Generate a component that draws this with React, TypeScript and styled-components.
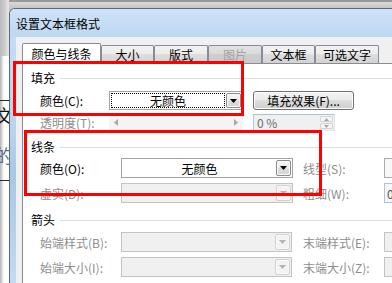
import React from "react";
import styled, { createGlobalStyle, css } from "styled-components";

const FONT = `"Noto Sans CJK SC", "Noto Sans", "DejaVu Sans", sans-serif`;

const Global = createGlobalStyle`
  html, body { margin: 0; padding: 0; }
  body { background: #c4c4c4; font-family: ${FONT}; font-size: 12px; color: #000; }
  * { box-sizing: border-box; }
`;

const Screen = styled.div`
  position: relative;
  width: 392px;
  height: 283px;
  overflow: hidden;
  display: flex;
  align-items: flex-start;
  background: linear-gradient(#9a9a9a 0, #9a9a9a 2px, #d9d9d9 2px, #c6c6c6 8px);
`;

/* ---------- document behind the dialog ---------- */
const Backdrop = styled.div`
  width: 9px;
  height: 100%;
  flex-shrink: 0;
  display: flex;
  flex-direction: column;
`;
const BackdropTop = styled.div`
  height: 56px;
  background: linear-gradient(90deg, #bcbcbc 0, #cdcdcd 5px, #e4e4e4 8px);
`;
const BackdropDoc = styled.div`
  flex: 1;
  display: flex;
  flex-direction: column;
  overflow: hidden;
  background: linear-gradient(90deg, #b4b4b4 0, #ececec 3px, #fff 4px);
`;
const DocRule = styled.div<{ $top: number }>`
  height: 1px;
  margin-top: ${(p) => p.$top}px;
  background: #2a2a2a;
`;
const DocGlyph = styled.div<{ $top: number; $color: string }>`
  margin-top: ${(p) => p.$top}px;
  margin-left: -5px;
  font-size: 18px;
  line-height: 20px;
  white-space: nowrap;
  color: ${(p) => p.$color};
`;

/* ---------- dialog window ---------- */
const Dialog = styled.div`
  margin-top: 8px;
  width: 400px;
  height: 275px;
  flex-shrink: 0;
  display: flex;
  flex-direction: column;
  border: 1px solid #5b6a79;
  border-right: none;
  border-bottom: none;
  border-radius: 6px 0 0 0;
  overflow: hidden;
  background: linear-gradient(180deg, #c8def5 0, #b9d3ee 45%, #a9c6e4 60%, #c3dbf2 100%);
`;
const TitleBar = styled.div`
  height: 28px;
  flex-shrink: 0;
  display: flex;
  align-items: center;
  padding-left: 6px;
  background: linear-gradient(#cfe3f8, #bdd7f2);
  font-size: 12px;
  color: #000;
`;
const ClientRow = styled.div`
  flex: 1;
  display: flex;
  padding-left: 6px;
`;
const Client = styled.div`
  flex: 1;
  display: flex;
  flex-direction: column;
  background: #f0f0f0;
  padding: 6px 0 0 6px;
`;

/* ---------- tabs ---------- */
const TabStrip = styled.div`
  display: flex;
  align-items: flex-end;
  height: 20px;
  flex-shrink: 0;
`;
const Tab = styled.div<{ $w: number; $active?: boolean; $disabled?: boolean }>`
  width: ${(p) => p.$w}px;
  height: ${(p) => (p.$active ? 21 : 18)}px;
  margin-bottom: ${(p) => (p.$active ? -1 : 0)}px;
  flex-shrink: 0;
  position: relative;
  z-index: ${(p) => (p.$active ? 2 : 1)};
  display: flex;
  align-items: center;
  justify-content: center;
  padding-bottom: ${(p) => (p.$active ? 2 : 0)}px;
  border: 1px solid #898c95;
  border-bottom: none;
  border-radius: 2px 2px 0 0;
  color: ${(p) => (p.$disabled ? "#a3a3a3" : "#000")};
  background: ${(p) =>
    p.$active
      ? "#fff"
      : p.$disabled
      ? "linear-gradient(#e2e2e2, #dadada 50%, #cfcfcf 50%, #c9c9c9)"
      : "linear-gradient(#f3f3f3, #ececec 50%, #dedede 50%, #d2d2d2)"};
`;
const Panel = styled.div`
  flex: 1;
  display: flex;
  flex-direction: column;
  background: #fff;
  border: 1px solid #898c95;
  border-right: none;
  border-bottom: none;
  padding: 7px 0 0 8px;
`;

/* ---------- groups and rows ---------- */
const GroupHeader = styled.div<{ $top: number }>`
  display: flex;
  align-items: center;
  gap: 5px;
  height: 14px;
  margin-top: ${(p) => p.$top}px;
`;
const GroupTitle = styled.span`
  line-height: 14px;
  white-space: nowrap;
`;
const GroupRule = styled.div`
  flex: 1;
  height: 1px;
  background: #d5dfe5;
`;
const Row = styled.div<{ $top: number; $h: number }>`
  display: flex;
  align-items: center;
  height: ${(p) => p.$h}px;
  margin-top: ${(p) => p.$top}px;
  padding-left: 9px;
`;
const Label = styled.span<{ $w: number; $gap?: number; $disabled?: boolean }>`
  width: ${(p) => p.$w}px;
  margin-left: ${(p) => p.$gap ?? 0}px;
  flex-shrink: 0;
  white-space: nowrap;
  color: ${(p) => (p.$disabled ? "#8d8d8d" : "#000")};
`;

/* ---------- controls ---------- */
const Combo = styled.div<{ $w: number; $disabled?: boolean }>`
  width: ${(p) => p.$w}px;
  height: 100%;
  flex-shrink: 0;
  display: flex;
  padding: 1px;
  border: 1px solid ${(p) => (p.$disabled ? "#c4c4c4" : "#a3a3a3")};
  background: ${(p) => (p.$disabled ? "#f0f0f0" : "#fff")};
`;
const ComboValue = styled.div<{ $focused?: boolean }>`
  flex: 1;
  display: flex;
  align-items: center;
  justify-content: center;
  white-space: nowrap;
  ${(p) =>
    p.$focused &&
    css`
      border: 1px dotted #000;
      margin-right: 1px;
    `}
`;
const DropButton = styled.div<{ $disabled?: boolean }>`
  width: 15px;
  flex-shrink: 0;
  display: flex;
  align-items: center;
  justify-content: center;
  border: 1px solid ${(p) => (p.$disabled ? "#d2d2d2" : "#8b8b8b")};
  border-radius: 2px;
  background: ${(p) =>
    p.$disabled ? "#f3f3f3" : "linear-gradient(#f7f7f7, #e9e9e9 50%, #dcdcdc 50%, #d6d6d6)"};
  box-shadow: inset 0 0 0 1px ${(p) => (p.$disabled ? "#f8f8f8" : "#fbfbfb")};
`;
const PushButton = styled.div<{ $w: number; $gap: number }>`
  width: ${(p) => p.$w}px;
  height: 100%;
  margin-left: ${(p) => p.$gap}px;
  flex-shrink: 0;
  display: flex;
  align-items: center;
  justify-content: center;
  white-space: nowrap;
  border: 1px solid #707070;
  border-radius: 3px;
  background: linear-gradient(#f2f2f2, #ebebeb 50%, #dddddd 50%, #cfcfcf);
  box-shadow: inset 0 0 0 1px #fcfcfc;
`;
const Slider = styled.div<{ $w: number }>`
  width: ${(p) => p.$w}px;
  height: 100%;
  flex-shrink: 0;
  display: flex;
  align-items: center;
  justify-content: space-between;
  padding: 0 5px;
  background: #f4f4f4;
`;
const Spin = styled.div<{ $w: number; $gap: number }>`
  width: ${(p) => p.$w}px;
  height: 100%;
  margin-left: ${(p) => p.$gap}px;
  flex-shrink: 0;
  display: flex;
  border: 1px solid;
  border-color: #abc3de #dde6ef #e3e9ef #b6cae0;
  background: #f0f0f0;
`;
const SpinValue = styled.div`
  flex: 1;
  display: flex;
  align-items: center;
  padding-left: 3px;
  color: #6d6d6d;
  white-space: nowrap;
`;
const SpinButtons = styled.div`
  width: 14px;
  display: flex;
  flex-direction: column;
  gap: 1px;
  padding: 1px 1px 1px 0;
`;
const SpinHalf = styled.div`
  flex: 1;
  display: flex;
  align-items: center;
  justify-content: center;
  border: 1px solid #d4d4d4;
  border-radius: 1px;
  background: #f5f5f5;
`;
const EdgeField = styled.div<{ $variant: "plain" | "focus" | "disabled" }>`
  width: 40px;
  height: 100%;
  flex-shrink: 0;
  display: flex;
  align-items: center;
  padding-left: 2px;
  border: 1px solid
    ${(p) => (p.$variant === "focus" ? "#a9c3e0" : p.$variant === "plain" ? "#ababab" : "#c4c4c4")};
  background: ${(p) => (p.$variant === "disabled" ? "#f0f0f0" : "#f7f7f7")};
  color: #505050;
`;

/* ---------- annotation overlay ---------- */
const Annotation = styled.div<{ $x: number; $y: number; $w: number; $h: number }>`
  position: absolute;
  left: ${(p) => p.$x}px;
  top: ${(p) => p.$y}px;
  width: ${(p) => p.$w}px;
  height: ${(p) => p.$h}px;
  border: 3px solid #ff0000;
  pointer-events: none;
  z-index: 10;
`;

/* ---------- icons ---------- */
const ArrowDown = ({ color = "#000", w = 7, h = 4 }: { color?: string; w?: number; h?: number }) => (
  <svg width={w} height={h} viewBox={`0 0 ${w} ${h}`}>
    <path d={`M0 0H${w}L${w / 2} ${h}Z`} fill={color} />
  </svg>
);
const ArrowUp = ({ color = "#000", w = 5, h = 3 }: { color?: string; w?: number; h?: number }) => (
  <svg width={w} height={h} viewBox={`0 0 ${w} ${h}`}>
    <path d={`M0 ${h}H${w}L${w / 2} 0Z`} fill={color} />
  </svg>
);
const ArrowSide = ({ dir, color = "#a8a8a8" }: { dir: "left" | "right"; color?: string }) => (
  <svg width={4} height={7} viewBox="0 0 4 7">
    <path d={dir === "left" ? "M4 0V7L0 3.5Z" : "M0 0V7L4 3.5Z"} fill={color} />
  </svg>
);

type ComboProps = { w: number; value?: string; disabled?: boolean; focused?: boolean };
const ComboBox = ({ w, value = "", disabled, focused }: ComboProps) => (
  <Combo $w={w} $disabled={disabled}>
    <ComboValue $focused={focused}>{value}</ComboValue>
    <DropButton $disabled={disabled}>
      <ArrowDown color={disabled ? "#b4b4b4" : "#000"} />
    </DropButton>
  </Combo>
);

const tabs = [
  { label: "颜色与线条", w: 79, active: true },
  { label: "大小", w: 53 },
  { label: "版式", w: 54 },
  { label: "图片", w: 54, disabled: true },
  { label: "文本框", w: 53 },
  { label: "可选文字", w: 64 },
];

export default function App() {
  return (
    <>
      <Global />
      <Screen>
        <Backdrop>
          <BackdropTop />
          <BackdropDoc>
            <DocRule $top={44} />
            <DocGlyph $top={4} $color="#111">文</DocGlyph>
            <DocGlyph $top={20} $color="#5a6c86">的</DocGlyph>
            <DocRule $top={15} />
          </BackdropDoc>
        </Backdrop>

        <Dialog>
          <TitleBar>设置文本框格式</TitleBar>
          <ClientRow>
            <Client>
              <TabStrip>
                {tabs.map((t) => (
                  <Tab key={t.label} $w={t.w} $active={t.active} $disabled={t.disabled}>
                    {t.label}
                  </Tab>
                ))}
              </TabStrip>
              <Panel>
                <GroupHeader $top={0}>
                  <GroupTitle>填充</GroupTitle>
                  <GroupRule />
                </GroupHeader>
                <Row $top={6} $h={19}>
                  <Label $w={69}>颜色(C):</Label>
                  <ComboBox w={134} value="无颜色" focused />
                  <PushButton $w={101} $gap={10}>填充效果(F)...</PushButton>
                </Row>
                <Row $top={4} $h={17}>
                  <Label $w={69} $disabled>透明度(T):</Label>
                  <Slider $w={134}>
                    <ArrowSide dir="left" />
                    <ArrowSide dir="right" />
                  </Slider>
                  <Spin $w={82} $gap={10}>
                    <SpinValue>0 %</SpinValue>
                    <SpinButtons>
                      <SpinHalf>
                        <ArrowUp color="#a8a8a8" />
                      </SpinHalf>
                      <SpinHalf>
                        <ArrowDown color="#a8a8a8" w={5} h={3} />
                      </SpinHalf>
                    </SpinButtons>
                  </Spin>
                </Row>

                <GroupHeader $top={9}>
                  <GroupTitle>线条</GroupTitle>
                  <GroupRule />
                </GroupHeader>
                <Row $top={4} $h={20}>
                  <Label $w={81}>颜色(O):</Label>
                  <ComboBox w={172} value="无颜色" />
                  <Label $w={81} $gap={10} $disabled>线型(S):</Label>
                  <EdgeField $variant="plain" />
                </Row>
                <Row $top={5} $h={20}>
                  <Label $w={81} $disabled>虚实(D):</Label>
                  <ComboBox w={172} disabled />
                  <Label $w={81} $gap={10} $disabled>粗细(W):</Label>
                  <EdgeField $variant="focus">0</EdgeField>
                </Row>

                <GroupHeader $top={10}>
                  <GroupTitle>箭头</GroupTitle>
                  <GroupRule />
                </GroupHeader>
                <Row $top={5} $h={20}>
                  <Label $w={81} $disabled>始端样式(B):</Label>
                  <ComboBox w={171} disabled />
                  <Label $w={81} $gap={11} $disabled>末端样式(E):</Label>
                  <EdgeField $variant="disabled" />
                </Row>
                <Row $top={5} $h={20}>
                  <Label $w={81} $disabled>始端大小(I):</Label>
                  <ComboBox w={171} disabled />
                  <Label $w={81} $gap={11} $disabled>末端大小(Z):</Label>
                  <EdgeField $variant="disabled" />
                </Row>
              </Panel>
            </Client>
          </ClientRow>
        </Dialog>

        <Annotation $x={13} $y={61} $w={231} $h={55} />
        <Annotation $x={24} $y={130} $w={298} $h={66} />
      </Screen>
    </>
  );
}
